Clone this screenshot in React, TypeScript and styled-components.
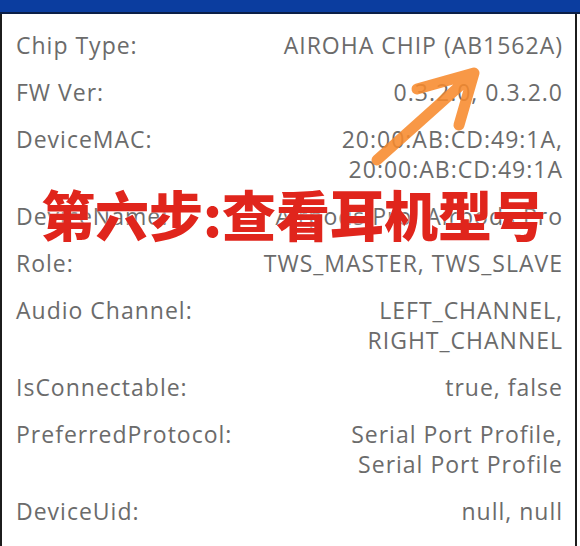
import styled, { createGlobalStyle } from 'styled-components';

const GlobalStyle = createGlobalStyle`
  html, body {
    margin: 0;
    padding: 0;
    background: #ffffff;
  }
`;

interface InfoRowProps {
  label: string;
  values: string[];
}

const rows: InfoRowProps[] = [
  { label: 'Chip Type:', values: ['AIROHA CHIP (AB1562A)'] },
  { label: 'FW Ver:', values: ['0.3.2.0, 0.3.2.0'] },
  { label: 'DeviceMAC:', values: ['20:00:AB:CD:49:1A,', '20:00:AB:CD:49:1A'] },
  { label: 'DeviceName:', values: ['Airpods Pro, Airpods Pro'] },
  { label: 'Role:', values: ['TWS_MASTER, TWS_SLAVE'] },
  { label: 'Audio Channel:', values: ['LEFT_CHANNEL,', 'RIGHT_CHANNEL'] },
  { label: 'IsConnectable:', values: ['true, false'] },
  { label: 'PreferredProtocol:', values: ['Serial Port Profile,', 'Serial Port Profile'] },
  { label: 'DeviceUid:', values: ['null, null'] },
];

function InfoRow({ label, values }: InfoRowProps) {
  return (
    <Row>
      <Label>{label}</Label>
      <Value>
        {values.map((v) => (
          <div key={v + label}>{v}</div>
        ))}
      </Value>
    </Row>
  );
}

function App() {
  return (
    <Page>
      <GlobalStyle />
      <TopBar />
      <Panel>
        {rows.map((r) => (
          <InfoRow key={r.label} label={r.label} values={r.values} />
        ))}
      </Panel>
      <Caption>第六步:查看耳机型号</Caption>
      <Arrow width="130" height="110" viewBox="0 0 130 110">
        <path
          d="M10 95 L105 10 M50 24 L107 8 L92 60"
          fill="none"
          stroke="#f78a2c"
          strokeOpacity="0.88"
          strokeWidth="11"
          strokeLinecap="round"
          strokeLinejoin="round"
        />
      </Arrow>
    </Page>
  );
}

export default App;

const Page = styled.div`
  position: relative;
  width: 580px;
  height: 546px;
  overflow: hidden;
  background: #ffffff;
  font-family: 'Open Sans', Lato, sans-serif;
`;

const TopBar = styled.div`
  height: 12px;
  background: #0b3d9f;
  border-bottom: 2px solid #0b1f47;
`;

const Panel = styled.div`
  width: 577px;
  height: 532px;
  padding: 7px 12px 0 14px;
  box-sizing: border-box;
  border-left: 2px solid #1c1c1c;
  border-right: 2px solid #1c1c1c;
`;

const Row = styled.div`
  display: flex;
  justify-content: space-between;
  align-items: flex-start;
  padding: 8.5px 0;
  font-size: 23px;
  line-height: 30px;
  letter-spacing: 1px;
  color: #6b6b6b;
`;

const Label = styled.div`
  white-space: nowrap;
`;

const Value = styled.div`
  text-align: right;
  white-space: nowrap;
`;

const Caption = styled.div`
  position: absolute;
  left: 41px;
  top: 187px;
  font-family: 'Noto Sans CJK SC', sans-serif;
  font-size: 54px;
  font-weight: 900;
  line-height: 1;
  color: #e0251c;
  white-space: nowrap;
  text-shadow: 0 0 2px rgba(255, 255, 255, 0.9);
`;

const Arrow = styled.svg`
  position: absolute;
  display: block;
  left: 367px;
  top: 65px;
`;
